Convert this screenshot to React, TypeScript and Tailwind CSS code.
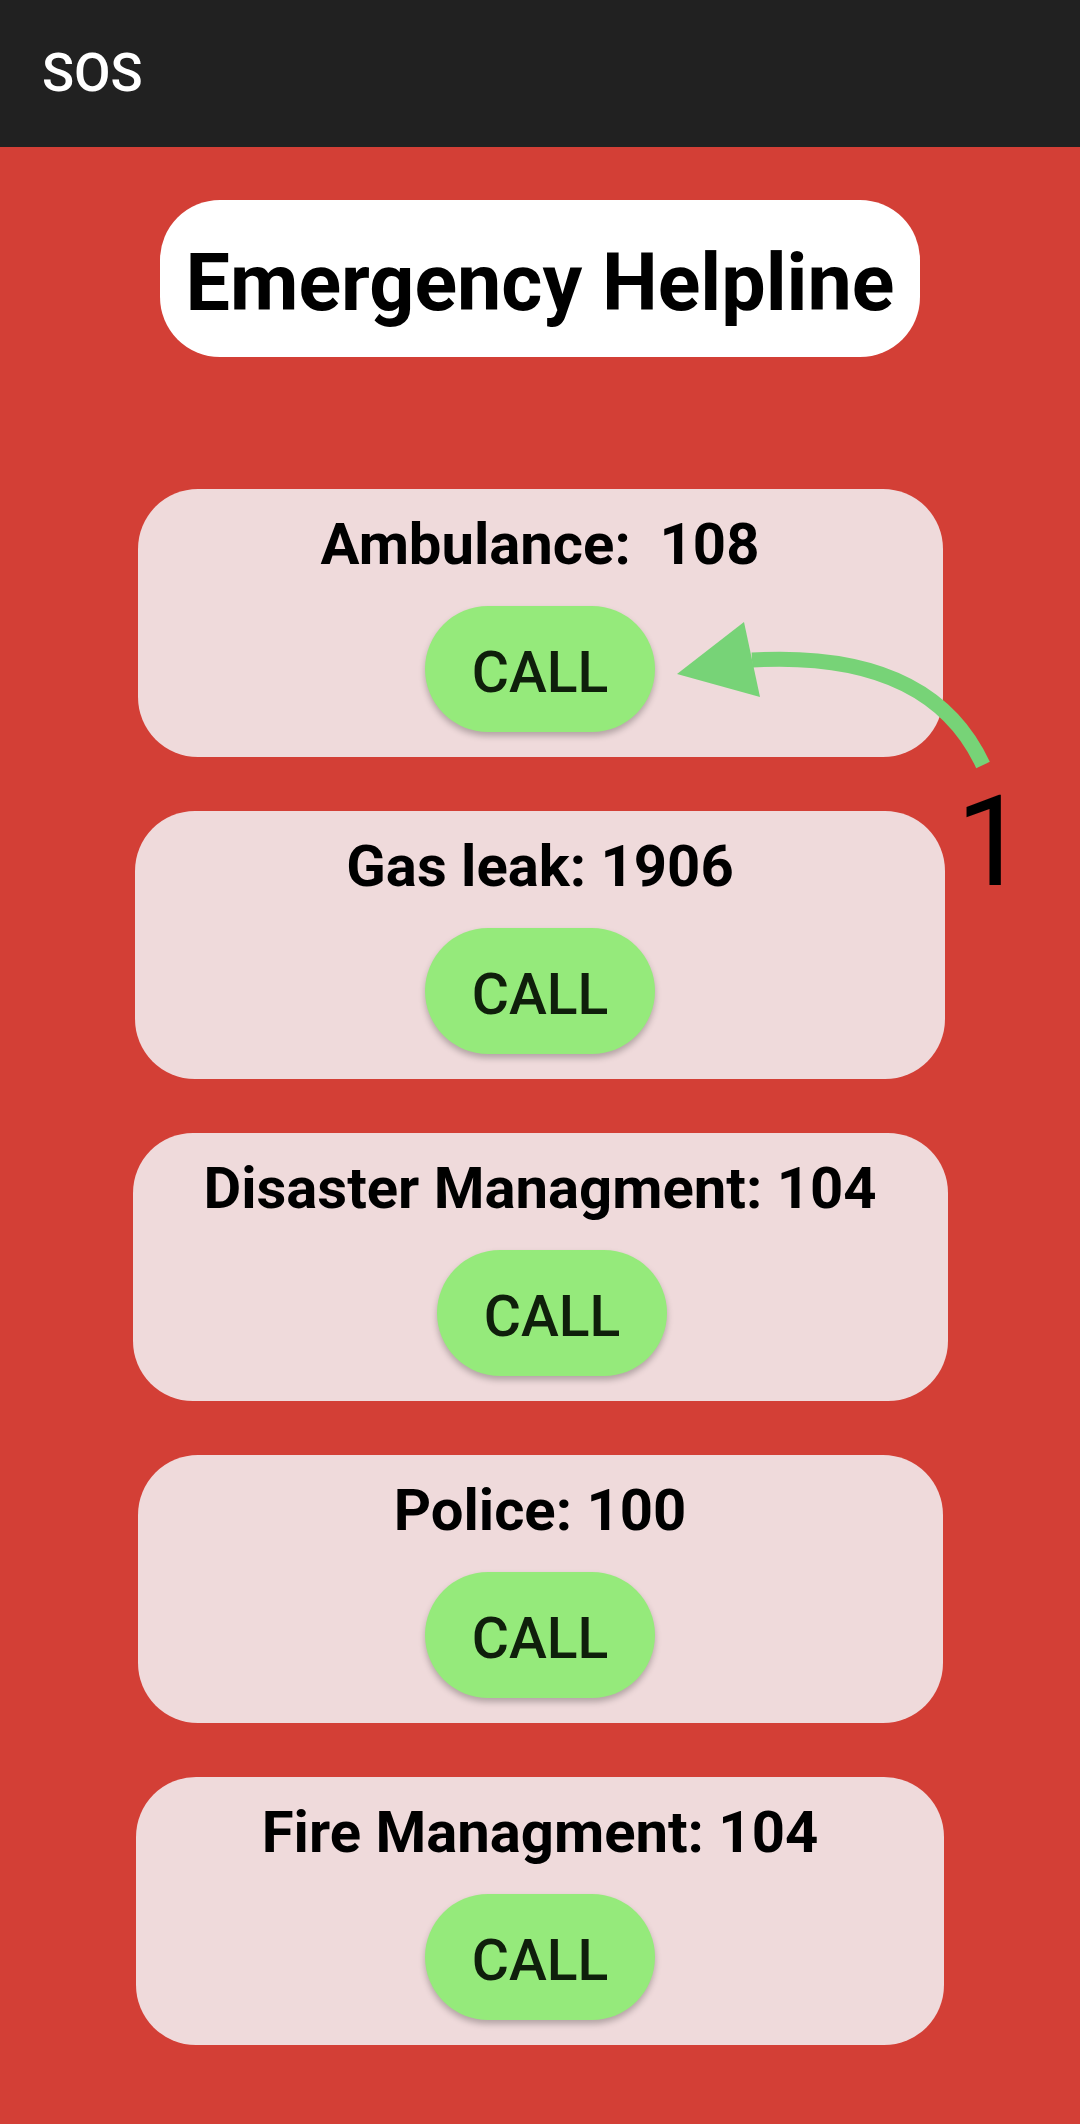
import React from 'react';

type Helpline = {
  label: string;
  card: string;
  button: string;
};

const HELPLINES: Helpline[] = [
  { label: 'Ambulance:  108', card: 'w-[805px]', button: '' },
  { label: 'Gas leak: 1906', card: 'w-[810px]', button: '' },
  { label: 'Disaster Managment: 104', card: 'w-[815px]', button: 'ml-[24px]' },
  { label: 'Police: 100', card: 'w-[805px]', button: '' },
  { label: 'Fire Managment: 104', card: 'w-[808px]', button: '' },
];

const App: React.FC = () => {
  return (
    <div className="relative min-h-screen flex flex-col bg-[#d33f36] font-['Roboto',sans-serif]">
      {/* Toolbar */}
      <header className="h-[147px] bg-[#212121] flex items-center px-[42px] shrink-0">
        <span className="text-white text-[53px] font-medium leading-none">SOS</span>
      </header>

      <main className="flex flex-col items-center pt-[53px] pb-[78px]">
        <div className="w-[760px] bg-white rounded-[60px] pt-[37px] pb-[27px] text-center">
          <h1 className="text-black text-[79px] font-bold leading-[93px]">Emergency Helpline</h1>
        </div>

        <div className="mt-[132px] flex flex-col items-center gap-[54px]">
          {HELPLINES.map((item) => (
            <section
              key={item.label}
              className={`${item.card} h-[268px] bg-[#efdadb] rounded-[60px] flex flex-col items-center pt-[21px]`}
            >
              <p className="text-black text-[58px] font-bold leading-[68px] whitespace-pre">{item.label}</p>
              <button
                className={`${item.button} mt-[28px] w-[230px] h-[126px] rounded-full bg-[#95ea7b] shadow-[0_4px_6px_rgba(0,0,0,0.25)] flex items-center justify-center pt-[6px]`}
              >
                <span className="text-[#0f1f0b] text-[57px] font-medium leading-none">CALL</span>
              </button>
            </section>
          ))}
        </div>
      </main>

      {/* Annotation arrow */}
      <svg
        className="absolute left-0 top-0 pointer-events-none"
        width="1080"
        height="2124"
        viewBox="0 0 1080 2124"
      >
        <path d="M 983 765 Q 930 650 752 660" fill="none" stroke="#77d377" strokeWidth="15" />
        <polygon points="677,674 744,622 760,697" fill="#77d377" />
      </svg>
      <div className="absolute left-[956px] top-[779px] text-black text-[126px] leading-none font-normal pointer-events-none">
        1
      </div>
    </div>
  );
};

export default App;
